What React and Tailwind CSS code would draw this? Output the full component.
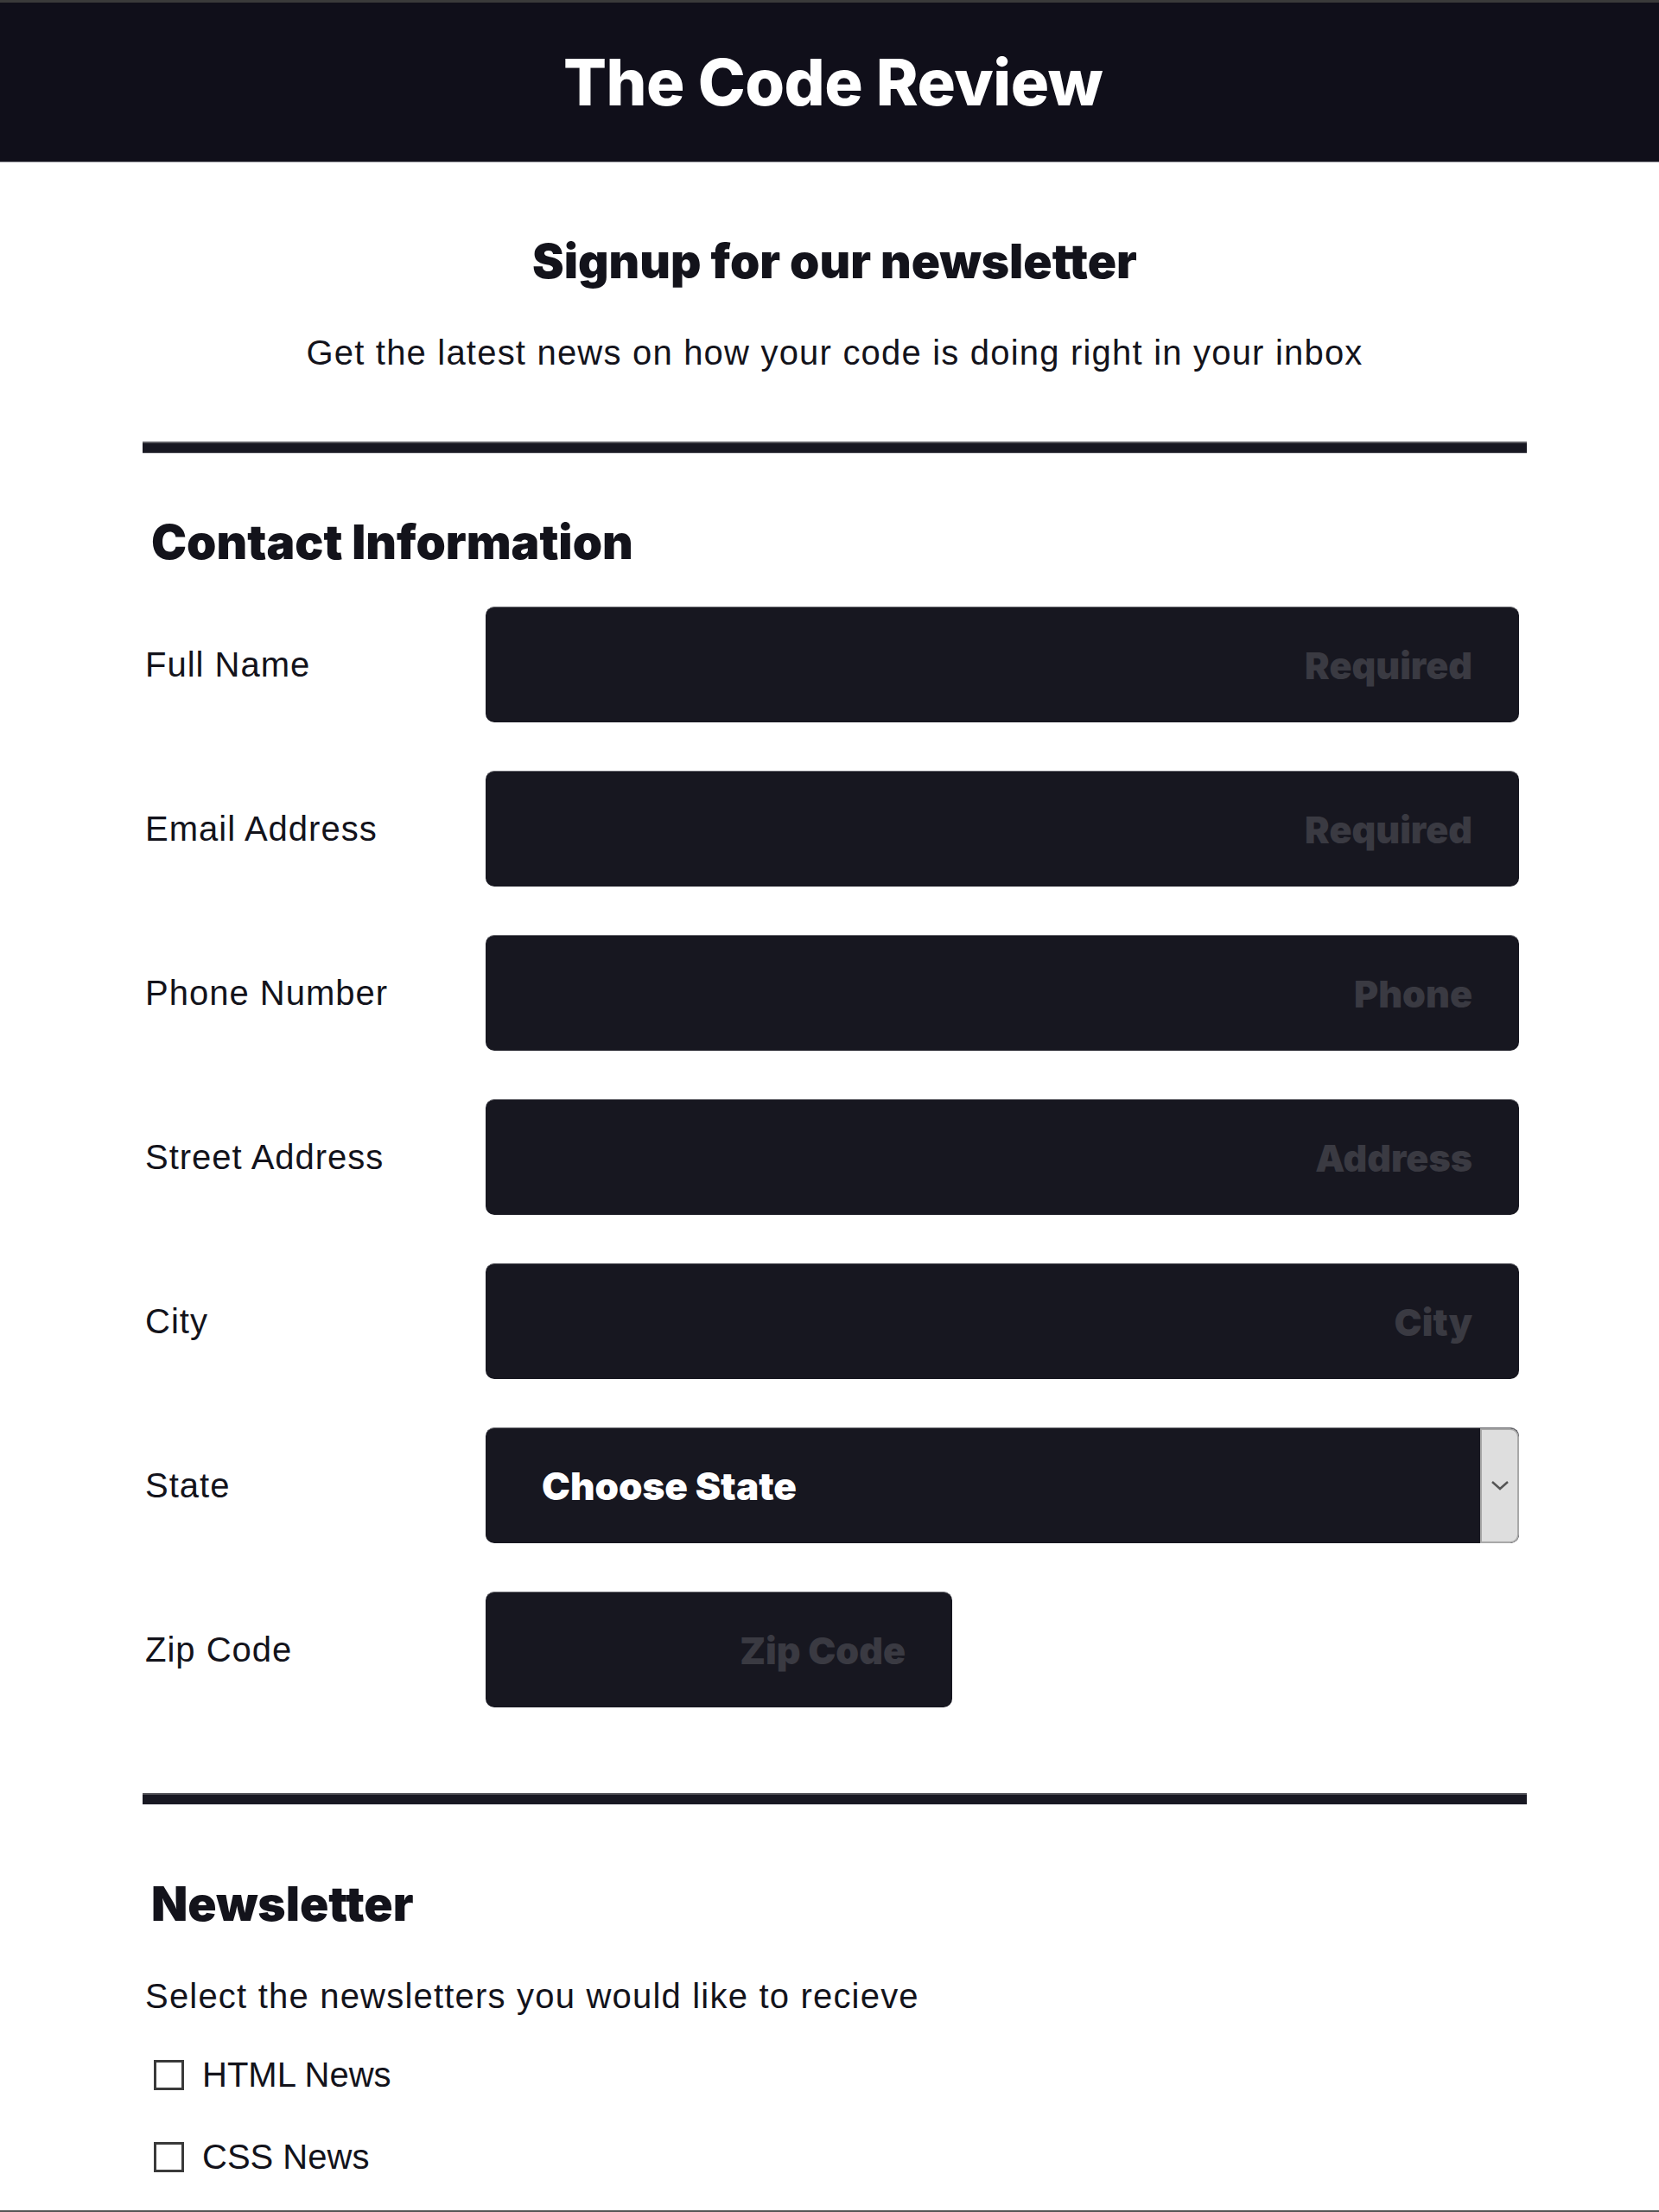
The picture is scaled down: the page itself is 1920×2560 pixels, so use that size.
const fields = [
  { label: "Full Name", placeholder: "Required" },
  { label: "Email Address", placeholder: "Required" },
  { label: "Phone Number", placeholder: "Phone" },
  { label: "Street Address", placeholder: "Address" },
  { label: "City", placeholder: "City" },
];

const heavy = "font-['Inter',sans-serif] font-black";

const Divider = () => (
  <div className="h-[14px] w-full border-t-2 border-b border-t-[#5c5c62] border-b-[#c8c8cc] bg-[#181822]" />
);

const Row = ({ label, children }) => (
  <div className="flex h-[134px] items-center">
    <label className="w-[397px] pl-[3px] text-[40px] leading-[48px] tracking-[1px] text-[#13131b]">{label}</label>
    {children}
  </div>
);

const Checkbox = ({ label }) => (
  <label className="flex h-[48px] items-center pl-[13px]">
    <span className="h-[35px] w-[35px] border-[3px] border-[#3a3a3a] bg-white" />
    <span className="ml-[21px] text-[40px] leading-[48px] text-[#13131b]">{label}</span>
  </label>
);

export default function App() {
  return (
    <div className="h-[2560px] overflow-hidden border-b-2 border-[#555] bg-white font-['Liberation_Sans',Arial,sans-serif]">
      <header className="flex h-[188px] items-center justify-center border-t-[3px] border-b border-t-[#3a3a3a] border-b-[#a0a0a8] bg-[#100f1a]">
        <h1 className="pl-[8px] font-['Inter',sans-serif] text-[74px] font-extrabold leading-none tracking-[-0.5px] text-white">
          The Code Review
        </h1>
      </header>

      <div className="ml-[165px] w-[1602px]">
        <h2 className={`${heavy} mt-[82px] text-center text-[55px] leading-[64px] text-[#13131b]`}>
          Signup for our newsletter
        </h2>
        <p className="mt-[50px] text-center text-[40px] leading-[48px] tracking-[1.2px] text-[#13131b]">
          Get the latest news on how your code is doing right in your inbox
        </p>

        <div className="mt-[79px]">
          <Divider />
        </div>

        <h2 className={`${heavy} mt-[70px] pl-[10px] text-[55px] leading-[64px] text-[#13131b]`}>
          Contact Information
        </h2>

        <div className="mt-[43px] flex flex-col gap-[56px]">
          {fields.map((f) => (
            <Row key={f.label} label={f.label}>
              <input
                placeholder={f.placeholder}
                className={`${heavy} h-[134px] w-[1196px] rounded-[10px] border-t border-t-[#6a6a70] bg-[#171720] pr-[54px] text-right text-[43px] text-white outline-none placeholder:text-[#3a3a42]`}
              />
            </Row>
          ))}

          <Row label="State">
            <div className="flex h-[134px] w-[1196px] overflow-hidden rounded-[10px] border-t border-t-[#6a6a70] bg-[#171720]">
              <div className={`${heavy} flex flex-1 items-center pl-[65px] text-[44px] text-white`}>Choose State</div>
              <div className="flex w-[45px] items-center justify-center rounded-r-[10px] border-2 border-[#a8a8a8] bg-[#dedede]">
                <svg width="22" height="13" viewBox="0 0 22 13" fill="none">
                  <path d="M2 2 L11 10 L20 2" stroke="#555" strokeWidth="2.5" />
                </svg>
              </div>
            </div>
          </Row>

          <Row label="Zip Code">
            <input
              placeholder="Zip Code"
              className={`${heavy} h-[134px] w-[540px] rounded-[10px] border-t border-t-[#6a6a70] bg-[#171720] pr-[54px] text-right text-[43px] text-white outline-none placeholder:text-[#3a3a42]`}
            />
          </Row>
        </div>

        <div className="mt-[99px]">
          <Divider />
        </div>

        <h2 className={`${heavy} mt-[82px] pl-[10px] text-[55px] leading-[64px] text-[#13131b]`}>Newsletter</h2>
        <p className="mt-[51px] pl-[3px] text-[40px] leading-[48px] tracking-[1.2px] text-[#13131b]">
          Select the newsletters you would like to recieve
        </p>
        <div className="mt-[43px] flex flex-col gap-[47px]">
          <Checkbox label="HTML News" />
          <Checkbox label="CSS News" />
        </div>
      </div>
    </div>
  );
}
